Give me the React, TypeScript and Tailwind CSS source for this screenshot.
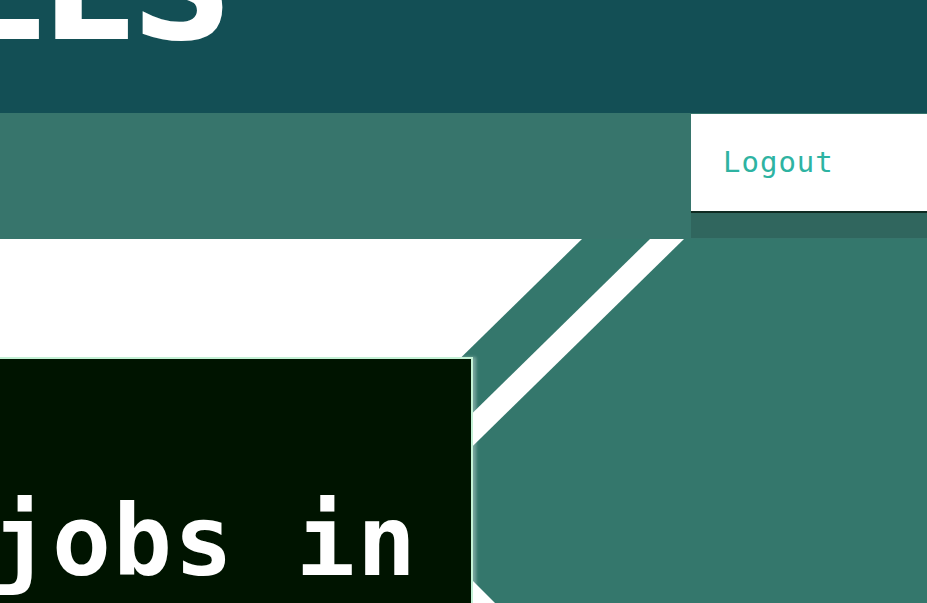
export default function App() {
  return (
    <div className="w-[927px] h-[603px] overflow-hidden bg-white">
      {/* Header title, cropped by the band */}
      <header className="h-[113px] overflow-hidden bg-[#134f55]">
        <h1 className="ml-[-308px] mt-[-79px] whitespace-nowrap font-['DejaVu_Sans',sans-serif] text-[140px] font-bold leading-none text-white">
          SKILLS
        </h1>
      </header>

      {/* Nav band */}
      <nav className="flex h-[126px] items-start justify-end bg-[#37756c] pt-px">
        <button className="flex h-[97px] w-[236px] items-center bg-white pl-[32px] text-left font-['DejaVu_Sans_Mono',monospace] text-[29px] leading-none tracking-[1px] text-[#2eb3a2] shadow-[0_2px_0_#0f2a22,0_27px_0_rgba(0,0,0,0.12)]">
          Logout
        </button>
      </nav>

      {/* Hero */}
      <section className="relative h-[364px] overflow-hidden bg-[#34776c]">
        <svg
          className="absolute inset-0"
          width="927"
          height="364"
          viewBox="0 0 927 364"
        >
          <polygon points="-10,0 582,0 174,400 -10,400" fill="#ffffff" />
          <polygon points="650,0 684,0 276,400 242,400" fill="#ffffff" />
          <polygon points="460,329 900,769 460,769" fill="#ffffff" />
        </svg>

        <div className="relative ml-[-40px] mt-[118px] h-[300px] w-[513px] border-2 border-[#c3f1d5] bg-[#001400] pl-[29px] pt-[133px] shadow-[3px_0_3px_rgba(255,255,255,0.35)]">
          <h2 className="whitespace-nowrap font-['DejaVu_Sans_Mono',monospace] text-[98px] font-bold leading-none tracking-[2px] text-white">
            jobs in
          </h2>
        </div>
      </section>
    </div>
  );
}
